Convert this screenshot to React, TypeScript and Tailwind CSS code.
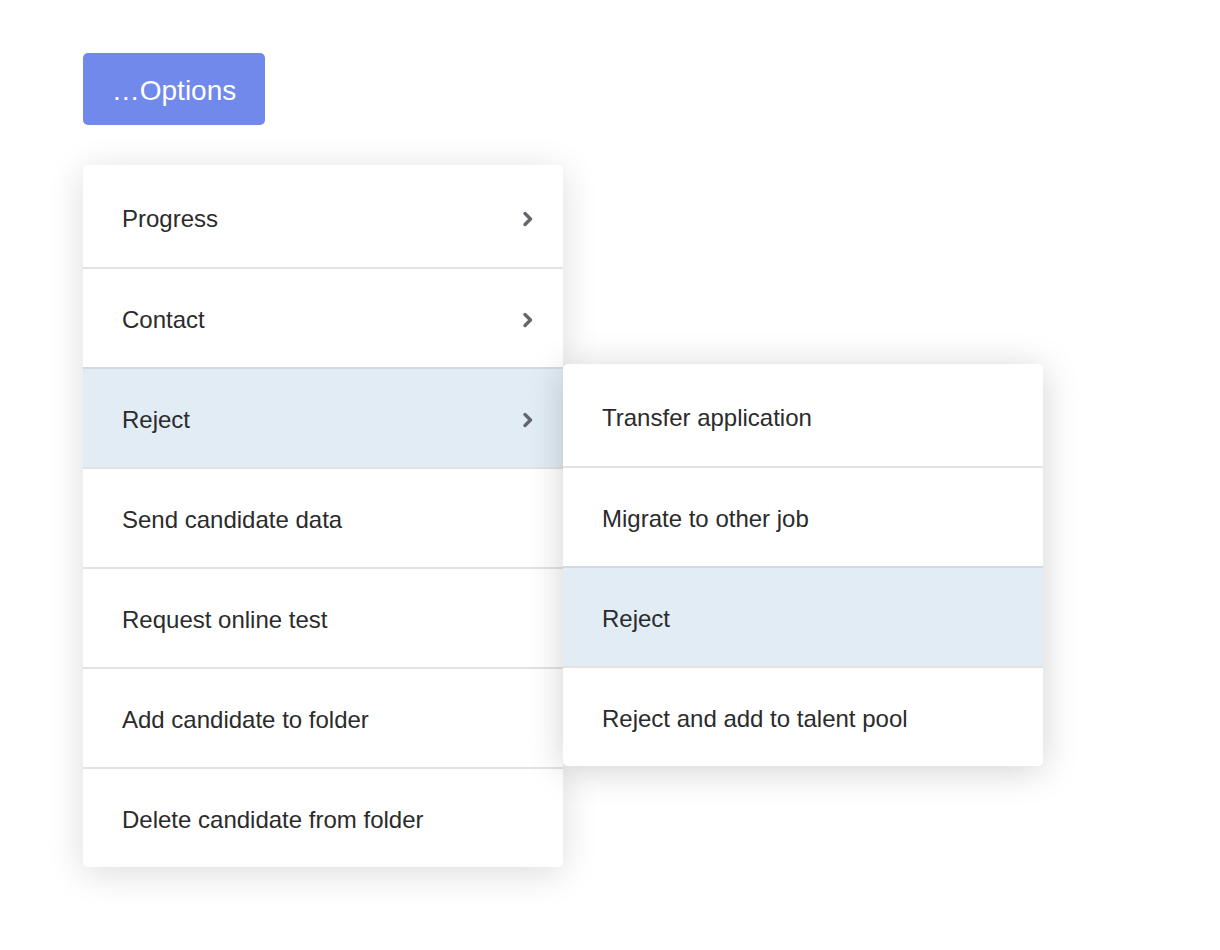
const mainItems = [
  { label: 'Progress', sub: true },
  { label: 'Contact', sub: true },
  { label: 'Reject', sub: true, active: true },
  { label: 'Send candidate data' },
  { label: 'Request online test' },
  { label: 'Add candidate to folder' },
  { label: 'Delete candidate from folder' },
];

const subItems = [
  { label: 'Transfer application' },
  { label: 'Migrate to other job' },
  { label: 'Reject', active: true },
  { label: 'Reject and add to talent pool' },
];

function Chevron() {
  return (
    <svg width="14" height="18" viewBox="0 0 14 18" fill="none" className="mt-[4px]">
      <path d="M4 3.5l5.5 5.5L4 14.5" stroke="#63676d" strokeWidth="3.4" strokeLinecap="round" strokeLinejoin="round" />
    </svg>
  );
}

function Row({ label, sub, active, first }: { label: string; sub?: boolean; active?: boolean; first?: boolean }) {
  return (
    <div
      className={`flex h-[100px] items-center justify-between pl-[39px] pr-[28px] text-[24px] text-[#2b2b2b] ${
        first ? '' : 'border-t-2'
      } ${active ? 'border-[#d2d9e2] bg-[#e2ecf5]' : 'border-[#e2e2e2] bg-white'}`}
    >
      <span className="pt-[4px]">{label}</span>
      {sub && <Chevron />}
    </div>
  );
}

export default function App() {
  return (
    <div className="min-h-[950px] bg-white pl-[83px] pt-[53px]" style={{ fontFamily: '"Liberation Sans", Arial, sans-serif' }}>
      <button className="flex h-[72px] w-[182px] items-center justify-center rounded-[5px] bg-[#7189ea] pt-[3px] text-[28px] text-white">
        …Options
      </button>

      <div className="relative mt-[40px] w-[480px]">
        <div className="overflow-hidden rounded-[5px] bg-white pt-[2px] shadow-[0_6px_36px_rgba(0,0,0,0.14)]">
          {mainItems.map((it, i) => (
            <Row key={it.label} {...it} first={i === 0} />
          ))}
        </div>

        <div className="absolute left-[480px] top-[199px] w-[480px] overflow-hidden rounded-[5px] bg-white pt-[2px] shadow-[0_4px_36px_rgba(0,0,0,0.18)]">
          {subItems.map((it, i) => (
            <Row key={it.label + i} {...it} first={i === 0} />
          ))}
        </div>
      </div>
    </div>
  );
}
